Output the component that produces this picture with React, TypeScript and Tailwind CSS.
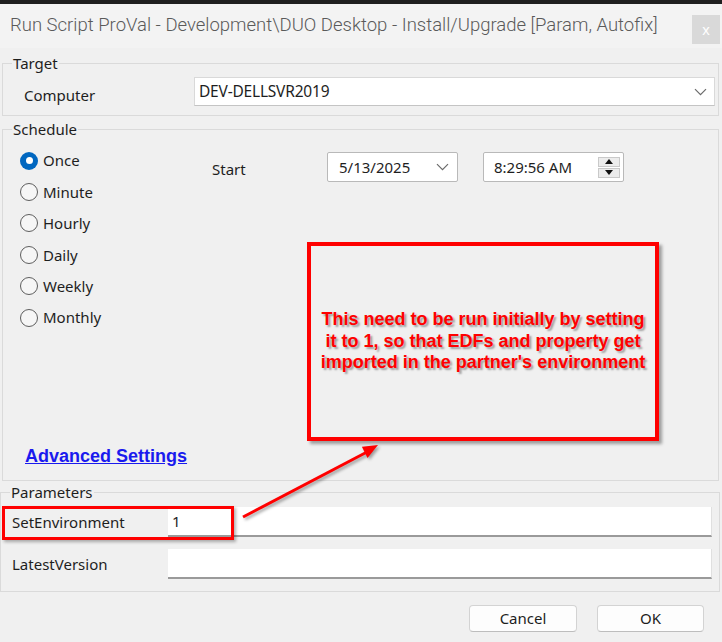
import React from "react";

const options = ["Once", "Minute", "Hourly", "Daily", "Weekly", "Monthly"];

function Radio({ checked }: { checked?: boolean }) {
  if (checked) {
    return (
      <span className="w-[18px] h-[18px] rounded-full bg-[#0067c0] flex items-center justify-center shrink-0">
        <span className="w-[7px] h-[7px] rounded-full bg-white" />
      </span>
    );
  }
  return <span className="w-[18px] h-[18px] rounded-full border-[1.5px] border-[#5e5e5e] bg-[#f6f6f6] shrink-0" />;
}

function Chevron() {
  return (
    <svg width="13" height="8" viewBox="0 0 13 8" fill="none" stroke="#6a6a6a" strokeWidth="1.2">
      <path d="M1 1.2l5.5 5.5L12 1.2" />
    </svg>
  );
}

function App() {
  return (
    <div className="w-[722px] h-[642px] relative overflow-hidden bg-[#f0f0f0] flex flex-col font-['Noto_Sans','Open_Sans',sans-serif] text-[#1e1e1e]">
      <div className="h-[4px] bg-[#1f1f1f] shrink-0" />
      {/* title bar */}
      <div className="h-[44px] bg-[#f3f3f3] flex items-start shrink-0">
        <span className="pl-[10px] pt-[9px] text-[18.5px] leading-[24px] text-[#5a5a5a] font-['Roboto',sans-serif] font-light whitespace-nowrap">
          Run Script ProVal - Development\DUO Desktop - Install/Upgrade [Param, Autofix]
        </span>
        <div className="ml-auto mt-[11px] mr-[2px] w-[28px] h-[29px] bg-[#d9d9d9] flex items-center justify-center text-white text-[15px] leading-none font-['Liberation_Sans',sans-serif]">
          x
        </div>
      </div>

      {/* Target */}
      <fieldset className="mt-[5px] ml-[2px] mr-[3px] border border-[#dadada] shrink-0">
        <legend className="ml-[9px] px-[1px] text-[15px] leading-[20px]">Target</legend>
        <div className="flex items-center pl-[21px] mt-[4px] pb-[9px]">
          <span className="w-[170px] text-[15px] leading-[20px] pt-[6px]">Computer</span>
          <div className="flex-1 mr-[3px] h-[29px] bg-white border border-[#d9d9d9] border-b-[#c4c4c4] flex items-center pl-[4px] pr-[7px] text-[15.5px]">
            <span className="tracking-[-0.2px]">DEV-DELLSVR2019</span>
            <span className="ml-auto">
              <Chevron />
            </span>
          </div>
        </div>
      </fieldset>

      {/* Schedule */}
      <fieldset className="mt-[3px] ml-[2px] mr-[3px] border border-[#dadada] shrink-0">
        <legend className="ml-[9px] px-[1px] text-[15px] leading-[20px]">Schedule</legend>
        <div className="flex pt-[6px]">
          <div className="pl-[17px] w-[209px] flex flex-col">
            {options.map((o, i) => (
              <label key={o} className="h-[31.4px] flex items-center gap-[5px] text-[15px]">
                <Radio checked={i === 0} />
                <span>{o}</span>
              </label>
            ))}
          </div>
          <div className="flex flex-col">
            <div className="mt-[7px] flex items-center h-[30px]">
              <span className="w-[115px] text-[15px] leading-[20px] pt-[4px]">Start</span>
              <div className="w-[131px] h-[30px] bg-white border border-[#b9b9b9] rounded-[2px] flex items-center pl-[11px] pr-[8px] text-[15px]">
                <span>5/13/2025</span>
                <span className="ml-auto">
                  <Chevron />
                </span>
              </div>
              <div className="ml-[25px] w-[141px] h-[30px] bg-white border border-[#b9b9b9] rounded-[2px] flex items-center pl-[10px] pr-[3px] text-[15px]">
                <span>8:29:56 AM</span>
                <div className="ml-auto w-[22px] flex flex-col gap-[1px]">
                  <div className="h-[10px] bg-[#ececec] border border-[#c9c9c9] flex items-center justify-center">
                    <svg width="8" height="5" viewBox="0 0 8 5">
                      <path d="M4 0L8 5H0z" fill="#111" />
                    </svg>
                  </div>
                  <div className="h-[10px] bg-[#ececec] border border-[#c9c9c9] flex items-center justify-center">
                    <svg width="8" height="5" viewBox="0 0 8 5">
                      <path d="M0 0h8L4 5z" fill="#111" />
                    </svg>
                  </div>
                </div>
              </div>
            </div>
            <div className="mt-[60px] ml-[95px] w-[352px] h-[199px] border-[4px] border-[#ff0000] shadow-[3px_3px_3px_rgba(0,0,0,0.35)] flex items-center justify-center">
              <p className="text-center text-[18px] leading-[21.5px] font-bold text-[#ff0000] font-['Liberation_Sans',Arial,sans-serif] [text-shadow:2px_2px_2px_rgba(0,0,0,0.35)]">
                This need to be run initially by setting
                <br />
                it to 1, so that EDFs and property get
                <br />
                imported in the partner's environment
              </p>
            </div>
          </div>
        </div>
        <div className="mt-[5px] pl-[22px] pb-[14px] flex">
          <a className="text-[18px] leading-[20px] font-bold underline text-[#1a1aee] font-['Liberation_Sans',Arial,sans-serif]">
            Advanced Settings
          </a>
        </div>
      </fieldset>

      {/* Parameters */}
      <fieldset className="mt-[1px] mr-[2px] border border-[#dadada] shrink-0">
        <legend className="ml-[9px] px-[1px] text-[15px] leading-[20px]">Parameters</legend>
        <div className="flex flex-col gap-[12px] mt-[5px] pb-[12px]">
          <div className="relative flex items-center h-[30px]">
            <span className="pl-[11px] w-[167px] text-[15px]">SetEnvironment</span>
            <div className="flex-1 mr-[7px] h-[30px] bg-white border-b-[2px] border-b-[#9a9a9a] border-r border-r-[#e0e0e0] flex items-center pl-[4px] text-[15px]">
              1
            </div>
            <div className="absolute left-[1px] top-[-1px] w-[232px] h-[34px] border-[3px] border-[#ff0000] shadow-[2px_2px_3px_rgba(0,0,0,0.3)]" />
          </div>
          <div className="flex items-center h-[30px]">
            <span className="pl-[11px] w-[167px] text-[15px]">LatestVersion</span>
            <div className="flex-1 mr-[7px] h-[30px] bg-white border-b-[2px] border-b-[#9a9a9a] border-r border-r-[#e0e0e0]" />
          </div>
        </div>
      </fieldset>

      {/* buttons */}
      <div className="mt-[13px] flex justify-end gap-[20px] pr-[18px]">
        <button className="w-[108px] h-[27px] bg-[#fdfdfd] border border-[#d3d3d3] border-b-[#bdbdbd] rounded-[4px] text-[15px] leading-none">
          Cancel
        </button>
        <button className="w-[107px] h-[27px] bg-[#fdfdfd] border border-[#d3d3d3] border-b-[#bdbdbd] rounded-[4px] text-[15px] leading-none">
          OK
        </button>
      </div>

      {/* annotation arrow */}
      <svg className="absolute inset-0 pointer-events-none" width="722" height="642">
        <g style={{ filter: "drop-shadow(2px 2px 1.5px rgba(0,0,0,0.35))" }}>
          <line x1="243" y1="517" x2="367" y2="452" stroke="#ff0000" strokeWidth="3" />
          <path d="M378 445L367.5 458L361.9 446.7z" fill="#ff0000" />
        </g>
      </svg>
    </div>
  );
}

export default App;
